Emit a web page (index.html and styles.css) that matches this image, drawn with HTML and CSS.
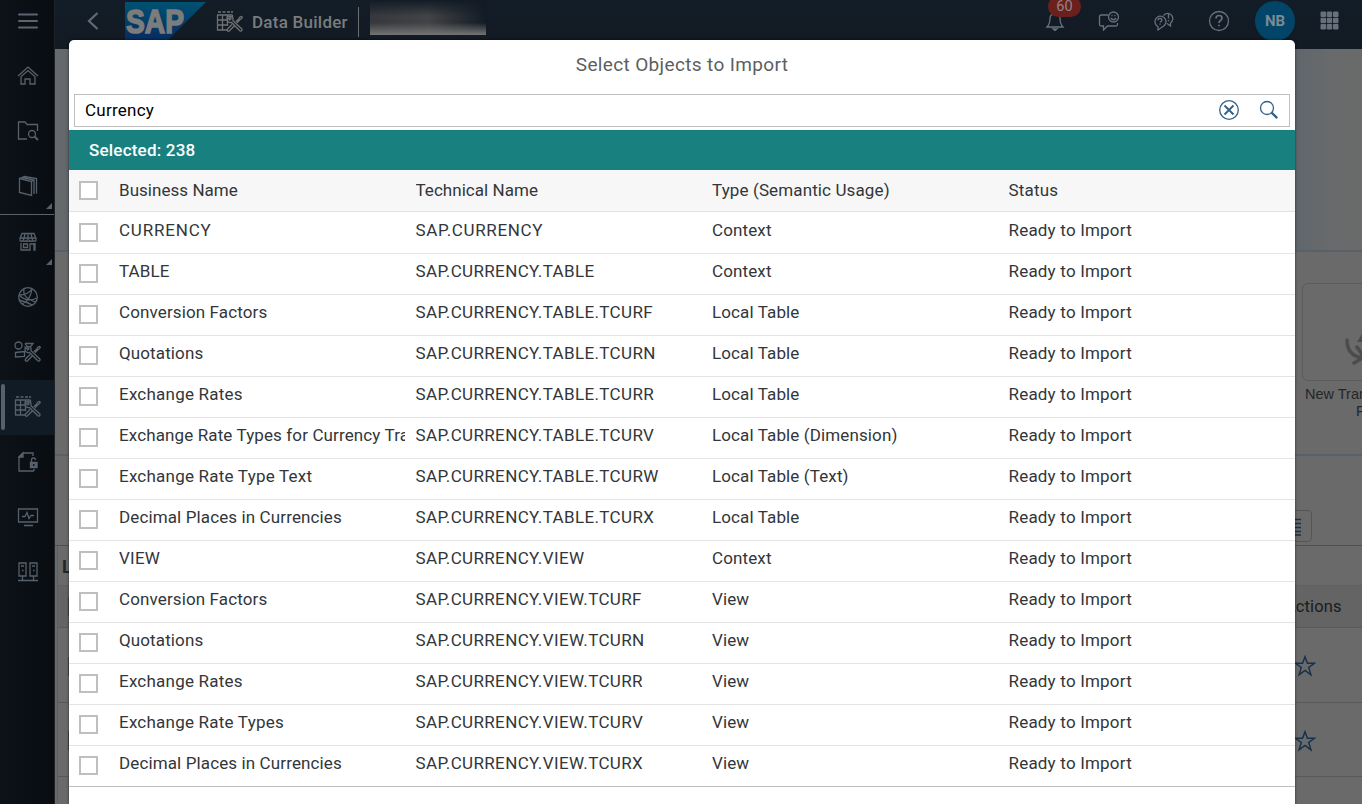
FILE: index.html
```html
<!DOCTYPE html>
<html lang="en">
<head>
<meta charset="utf-8">
<title>Data Builder</title>
<link rel="stylesheet" href="styles.css">
</head>
<body>
<svg class="defs" width="0" height="0">
  <symbol id="tools" viewBox="0 0 17 17"><path d="M1.200 1.800L3.800 4.300 5 3.200 3 1Q6 .5 7 2.800L7 5.200 15.800 13.500Q16.500 14.500 15.500 15.300T13.800 15.200L5.500 7Q1.500 7.500 1 4.500zM9.800 6.200L12.800 3.500 13.500 2 15.500.8 16.300 1.800 15 3.500 13.800 4.300 11 7.300M6 9L1.500 13.500Q.8 14.700 1.700 15.400T3.500 15.300L8.200 10.500"/></symbol>
  <symbol id="grid-tools" viewBox="0 0 27 22"><path d="M2 1h3M6.500 1h3M11 1h3M15 1h2M1 4h15.500M1 9h11M1 14h11M1 19h10M1.500 4v15M6.500 4v15M11.500 4v11M16.500 4v3"/><use href="#tools" x="10" y="4.500" width="17" height="17"/></symbol>
  <symbol id="star" viewBox="0 0 20 20"><path d="M10 1.500l2.200 6h6.300l-5.100 3.900 2 6.600-5.400-4-5.400 4 2-6.600L1.500 7.500h6.300z"/></symbol>
</svg>
<div class="app">
  <nav class="side">
    <a class="nav menu"><svg width="22" height="18" viewBox="0 0 22 18"><path d="M2 2.500h18M2 9h18M2 15.500h18"/></svg></a>
    <a class="nav"><svg width="22" height="20" viewBox="0 0 22 20"><path d="M1 10L11 1l10 9M4 10.500V18h4v-5h5v5h5v-7.500L11 4.500z"/></svg></a>
    <a class="nav"><svg width="22" height="20" viewBox="0 0 22 20"><path d="M10 18H1.500V1H8l2 2.500h10.500V10"/><circle cx="15" cy="13" r="3.500"/><path d="M17.500 15.500l3.500 3.500" stroke-width="1.800"/></svg></a>
    <a class="nav flag"><svg width="20" height="22" viewBox="0 0 20 22"><path d="M1.500 3.500l12 3v14l-12-3zM1.500 3.500l5-2 12 2v15M13.500 6.500l2-1.500M4 2.500l12 2.500v14"/></svg></a>
    <a class="nav flag shop"><svg width="20" height="20" viewBox="0 0 20 20"><path d="M4 1.500h12l2 5v2q-1.500 1.500-3 0-1.700 1.500-3.300 0-1.700 1.500-3.400 0-1.600 1.500-3.300 0-1.500 1.500-3 0v-2zM2 6h16M7 2L5.500 8M10 2v6M13 2l1.500 6M3 11v7h9v-6h4v6h1v-7M5.500 12h4v3.500h-4z"/></svg></a>
    <a class="nav"><svg width="22" height="22" viewBox="0 0 22 22"><circle cx="11" cy="11" r="9.300"/><path d="M7 3q-2 9 12 13M15 3Q11 9 2 9M2 9q8 8 18 3M5 18q8-3 10-15M2 14q8 2 13 5"/></svg></a>
    <a class="nav"><svg width="27" height="22" viewBox="0 0 27 22"><circle cx="4.500" cy="4.500" r="3.500"/><path d="M11 2.500h8l-3 4M11 2.500l2 3M1.500 11.500l9-1v5l-9 .500z"/><use href="#tools" x="10" y="4.500" width="17" height="17"/></svg></a>
    <a class="nav active"><svg width="27" height="22"><use href="#grid-tools"/></svg></a>
    <a class="nav"><svg width="22" height="22" viewBox="0 0 22 22"><path d="M17 20H2V6l4-4h10v3M17 20v-2M14.500 11V9q0-2 2-2t2 2"/><path class="solid" d="M2 6l4-4v4z"/><path class="solid" d="M13.500 11.500h6.500v5h-6.500z"/><path class="hole" d="M16.700 13v2"/></svg></a>
    <a class="nav"><svg width="22" height="20" viewBox="0 0 22 20"><path d="M1.500 2h19v13h-19zM7 18.500h9M5 9.500h3l2-4 2 6 2-3h3"/></svg></a>
    <a class="nav"><svg width="22" height="22" viewBox="0 0 22 22"><path d="M2 2h7v13H2zM13 2h7v13h-7zM4 5h3M15 5h3M5 9.500h1.500M16 9.500h1.500M5.500 15v5M16.500 15v5M1 19.500h20"/></svg></a>
  </nav>
  <div class="main">
    <header class="shell">
      <svg class="back" width="12" height="20" viewBox="0 0 12 20"><path d="M10.500 2L2 10l8.500 8"/></svg>
      <svg class="logo" width="81" height="40" viewBox="0 0 81 40"><defs><linearGradient id="lg" x1="0" y1="0" x2="0" y2="1"><stop offset="0" stop-color="#005273"/><stop offset="1" stop-color="#062b60"/></linearGradient></defs><path fill="url(#lg)" d="M0 2h81L43 40H0z"/><text x="1" y="33" textLength="58" lengthAdjust="spacingAndGlyphs">SAP</text></svg>
      <svg class="app-icon" width="27" height="22"><use href="#grid-tools"/></svg>
      <span class="title">Data Builder</span>
      <span class="rule"></span>
      <span class="redacted"></span>
      <div class="tools">
        <div class="bell"><svg width="20" height="22" viewBox="0 0 20 22"><path d="M2 17q3-3 3-9 0-4 5-4t5 4q0 6 3 9z"/><path class="solid" d="M8 19h4l-2 1.500z"/></svg><span class="badge">60</span></div>
        <svg width="22" height="20" viewBox="0 0 22 20"><path d="M10 4H3Q1.500 4 1.500 5.500v8q0 1.500 1.500 1.500h2.500v4l4-4H18q1.500 0 1.500-1.500V12"/><circle cx="15.500" cy="6" r="5"/><path d="M12.800 7q2.700 3.500 5.400 0M13.500 4.500h1M16.500 4.500h1"/></svg>
        <svg width="22" height="20" viewBox="0 0 22 20"><path d="M3.500 14.500A5.500 5.500 0 1 1 9.500 15.800L5 19v-3.200zM10.500 4.500a5.200 5.200 0 1 1 7 7.500v3l-3.500-2.500"/><path d="M5 9.300q0-1.800 2-1.800t2 1.500q0 1-2 2.300M7 12.500v1.200M15.500 3v4.500M15.500 9v1.200"/></svg>
        <svg width="22" height="22" viewBox="0 0 22 22"><circle cx="11" cy="11" r="9.500"/><path d="M8 8.500q0-3 3-3t3 2.500q0 1.500-1.500 2.500T11 13M11 14.800v1.500" stroke-width="1.700"/></svg>
        <span class="avatar">NB</span>
        <svg class="apps" width="20" height="20" viewBox="0 0 20 20"><path d="M1 1h4.500v4.500H1zM7.200 1h4.500v4.500H7.200zM13.500 1H18v4.500h-4.500zM1 7.200h4.500v4.500H1zM7.200 7.200h4.500v4.500H7.200zM13.500 7.200H18v4.500h-4.500zM1 13.500h4.500V18H1zM7.200 13.500h4.500V18H7.200zM13.500 13.500H18V18h-4.500z"/></svg>
      </div>
    </header>
    <section class="hero"></section>
    <section class="tiles"><div class="tile-box"><div class="tile"><svg width="60" height="60" viewBox="0 0 60 60"><path class="arrow" d="M3 14q0 16 16 18M13 21l7 10-10 6"/><path class="tri" d="M23 0l10 16H13z"/></svg></div><div class="caption">New Transformation<br><span>Flow</span></div></div></section>
    <section class="bar"><div class="view-btn"><svg width="18" height="18" viewBox="0 0 18 18"><path d="M0 1.500h16M0 5.500h16M0 9.500h16M0 13.500h16M0 17h16"/></svg></div></section>
    <section class="files">
      <div class="f-title">L</div>
      <div class="f-head"><i></i><span>Actions</span></div>
      <div class="f-row"><i></i><svg width="22" height="22"><use href="#star"/></svg></div>
      <div class="f-row"><i></i><svg width="22" height="22"><use href="#star"/></svg></div>
    </section>
  </div>
</div>

<div class="dialog">
  <h1>Select Objects to Import</h1>
  <div class="search"><span>Currency</span>
    <svg width="22" height="22" viewBox="0 0 22 22"><circle cx="11" cy="11" r="9.300"/><path d="M6.500 6.500l9 9M15.500 6.500l-9 9" stroke-width="1.900"/></svg>
    <svg width="20" height="20" viewBox="0 0 20 20"><circle cx="8" cy="8" r="6.500"/><path d="M12.500 12.500l5.700 5.700" stroke-width="2.400"/></svg>
  </div>
  <div class="selected">Selected: 238</div>
  <div class="table">
    <div class="row head"><i></i><span class="n">Business Name</span><span class="h">Technical Name</span><span>Type (Semantic Usage)</span><span>Status</span></div>
    <div class="row first"><i></i><span class="n caps">CURRENCY</span><span class="t short">SAP.CURRENCY</span><span>Context</span><span>Ready to Import</span></div>
    <div class="row"><i></i><span class="n">TABLE</span><span class="t">SAP.CURRENCY.TABLE</span><span>Context</span><span>Ready to Import</span></div>
    <div class="row"><i></i><span class="n">Conversion Factors</span><span class="t">SAP.CURRENCY.TABLE.TCURF</span><span>Local Table</span><span>Ready to Import</span></div>
    <div class="row"><i></i><span class="n">Quotations</span><span class="t">SAP.CURRENCY.TABLE.TCURN</span><span>Local Table</span><span>Ready to Import</span></div>
    <div class="row"><i></i><span class="n wide">Exchange Rates</span><span class="t">SAP.CURRENCY.TABLE.TCURR</span><span>Local Table</span><span>Ready to Import</span></div>
    <div class="row"><i></i><span class="n">Exchange Rate Types for Currency Translation</span><span class="t">SAP.CURRENCY.TABLE.TCURV</span><span>Local Table (Dimension)</span><span>Ready to Import</span></div>
    <div class="row"><i></i><span class="n wide">Exchange Rate Type Text</span><span class="t">SAP.CURRENCY.TABLE.TCURW</span><span>Local Table (Text)</span><span>Ready to Import</span></div>
    <div class="row"><i></i><span class="n">Decimal Places in Currencies</span><span class="t">SAP.CURRENCY.TABLE.TCURX</span><span>Local Table</span><span>Ready to Import</span></div>
    <div class="row"><i></i><span class="n wide">VIEW</span><span class="t">SAP.CURRENCY.VIEW</span><span>Context</span><span>Ready to Import</span></div>
    <div class="row"><i></i><span class="n">Conversion Factors</span><span class="t">SAP.CURRENCY.VIEW.TCURF</span><span>View</span><span>Ready to Import</span></div>
    <div class="row"><i></i><span class="n">Quotations</span><span class="t">SAP.CURRENCY.VIEW.TCURN</span><span>View</span><span>Ready to Import</span></div>
    <div class="row"><i></i><span class="n wide">Exchange Rates</span><span class="t">SAP.CURRENCY.VIEW.TCURR</span><span>View</span><span>Ready to Import</span></div>
    <div class="row"><i></i><span class="n wide">Exchange Rate Types</span><span class="t">SAP.CURRENCY.VIEW.TCURV</span><span>View</span><span>Ready to Import</span></div>
    <div class="row"><i></i><span class="n">Decimal Places in Currencies</span><span class="t">SAP.CURRENCY.VIEW.TCURX</span><span>View</span><span>Ready to Import</span></div>
  </div>
</div>
</body>
</html>
```
FILE: styles.css
```css
* { box-sizing: border-box; }
body { margin: 0; width: 1362px; height: 804px; overflow: hidden; position: relative; font-family: Roboto, "Liberation Sans", sans-serif; font-size: 17px; color: #32363a; }
.defs { position: absolute; }
svg { display: block; flex: none; fill: none; stroke: currentColor; stroke-width: 1.3; }
.solid { fill: currentColor; }
.hole { stroke: #0b1015; }
.app { display: flex; height: 804px; }

.side { width: 55px; flex: none; background: linear-gradient(90deg, #0c1218, #090d12); border-right: 1px solid #1b2329; color: #56616c; }
.nav { height: 55px; display: flex; align-items: center; justify-content: center; position: relative; padding: 0 0 1px 1px; }
.nav.menu { height: 49px; padding-bottom: 7px; color: #5b6570; }
.nav.menu svg { stroke-width: 2; stroke-linecap: round; }
.nav.flag::after { content: ""; position: absolute; right: 2px; bottom: 5px; border: 3.5px solid transparent; border-right-color: #56616c; border-bottom-color: #56616c; }
.nav.shop { height: 56px; border-top: 1px solid #5d6166; }
.nav.active { background: #111b25; }
.nav.active::before { content: ""; position: absolute; left: 1px; top: 4px; width: 4px; height: 46px; border-radius: 2px; background: #56616c; }

.main { flex: 1; min-width: 0; overflow: hidden; background: #6a6a6a; display: flex; flex-direction: column; }
.shell { height: 49px; flex: none; background: linear-gradient(#131d27, #121a23); display: flex; align-items: flex-start; padding-left: 32px; color: #7a7d80; }
.back { margin-top: 11px; stroke-width: 2.2; color: #5f6b77; }
.logo { margin-left: 26px; stroke: none; }
.logo text { font: bold 34px "Liberation Sans", sans-serif; fill: #7c7c7c; stroke: #7c7c7c; stroke-width: 1.6; }
.app-icon { margin: 11px 0 0 10px; color: #6e7174; }
.title { margin: 11px 0 0 9px; font-size: 17px; font-weight: 500; line-height: 22px; width: 106px; white-space: nowrap; letter-spacing: .25px; }
.rule { width: 1px; height: 30px; margin-top: 7px; background: #6b6e70; }
.redacted { margin: 0 0 0 11px; width: 116px; height: 35px; background: linear-gradient(#121b25 0, transparent 45%), linear-gradient(transparent 65%, #747474), linear-gradient(90deg, #35383c, #424346 50%, #2b2f35 75%, #121b25); }
.tools { margin-left: auto; height: 42px; display: flex; align-items: center; color: #67717b; padding-right: 22px; gap: 33px; }
.bell { position: relative; }
.badge { position: absolute; left: 3px; top: -14px; width: 33px; height: 21px; border-radius: 10.5px; background: #6c201e; color: #8f8585; font-size: 14.5px; line-height: 21px; text-align: center; }
.avatar { width: 40px; height: 40px; margin: 0 -8px 0 -8px; border-radius: 50%; background: #034568; color: #798b96; font-size: 15px; font-weight: 700; line-height: 41px; text-align: center; }
.apps { fill: currentColor; stroke-width: 1; stroke-linejoin: round; }

.hero { height: 203px; flex: none; background: linear-gradient(90deg, #696b6d, #60666b 14px, #60666b 1240px, #686a6c 1275px, #6a6a6a); border-bottom: 2px solid #58616a; }
.tiles { height: 204px; flex: none; border-bottom: 2px solid #58606a; padding: 31px 0 0 1247px; }
.tile-box { width: 98px; }
.tile { width: 98px; height: 98px; border: 1px solid #5b5b5b; border-radius: 6px; padding: 42px 0 0 41px; overflow: hidden; }
.arrow { stroke: #4c4c4c; stroke-width: 3.500; stroke-linecap: round; }
.tri { fill: #4c4c4c; stroke: none; }
.caption { margin: 5px 0 0 3px; font: 14.500px/17px "Liberation Sans", sans-serif; color: #242628; white-space: nowrap; }
.caption span { margin-left: 51px; }
.bar { height: 90px; flex: none; border-bottom: 1px solid #4f4f4f; padding: 54px 0 0 1217px; }
.view-btn { width: 40px; height: 32px; border: 1px solid #555; border-radius: 4px; padding: 7px 0 0 12px; color: #18324b; }
.files { flex: 1; margin-left: 2px; border-left: 1px solid #58616a; }
.f-title { height: 40px; border-bottom: 1px solid #58616a; padding-left: 4px; font-size: 18px; font-weight: 700; line-height: 41px; color: #242628; }
.f-head { height: 42px; background: #646464; border-bottom: 1px solid #595959; display: flex; align-items: center; color: #1a1c1e; }
.f-head span { margin-left: 1217px; font-size: 16.500px; letter-spacing: .1px; }
.f-head i, .f-row i { width: 19px; height: 19px; margin: 0 -19px 0 10px; border: 1px solid #464646; flex: none; }
.f-row { height: 75px; border-bottom: 1px solid #595959; display: flex; align-items: center; color: #16304a; padding-top: 2px; }
.f-row + .f-row { height: 74px; }
.f-row svg { margin-left: 1226px; }

.dialog { position: absolute; left: 69px; top: 40px; width: 1226px; height: 764px; background: #fff; border-radius: 5px 5px 0 0; box-shadow: 0 0 3px rgba(0,0,0,.6); overflow: hidden; }
h1 { margin: 0; height: 54px; font-size: 19px; font-weight: 400; line-height: 50px; text-align: center; color: #5c5f62; letter-spacing: .35px; }
.search { margin: 0 5px; height: 33px; border: 1px solid #bfbfbf; display: flex; align-items: center; padding: 0 10px 1px 10px; color: #346187; }
.search span { color: #000; flex: 1; letter-spacing: .25px; }
.search svg + svg { margin-left: 19px; }
.selected { margin-top: 3px; height: 40px; background: #188180; color: #fff; padding-left: 20px; font-weight: 500; line-height: 40px; letter-spacing: .2px; }
.row { height: 41px; border-bottom: 1px solid #e4e4e4; display: grid; grid-template-columns: 50px 296.500px 296.500px 296.500px 1fr; }
.row.head { height: 42px; background: #f7f7f7; border-color: #e2e2e2; }
.row.first { height: 42px; }
.row:last-child { border-bottom-color: #bfbfbf; }
.row i { width: 19px; height: 19px; margin: 10px 0 0 10px; border: 2px solid #bfbfbf; background: #fff; }
.row.first i, .row.head i { margin-top: 11px; }
.row span { height: 34px; line-height: 34px; white-space: nowrap; overflow: hidden; margin-right: 11px; letter-spacing: .2px; }
.row span:nth-child(4) { letter-spacing: .12px; }
.row.first span { line-height: 36px; height: 36px; }
.row.head span { line-height: 40px; height: 40px; }
.row .n { letter-spacing: .12px; }
.row .n.wide { letter-spacing: .22px; }
.row .n.caps { letter-spacing: .8px; }
.row.head .n, .row.head .h { letter-spacing: .04px; }
.row .t { letter-spacing: .36px; }
.row .t.short { letter-spacing: .65px; }
```
